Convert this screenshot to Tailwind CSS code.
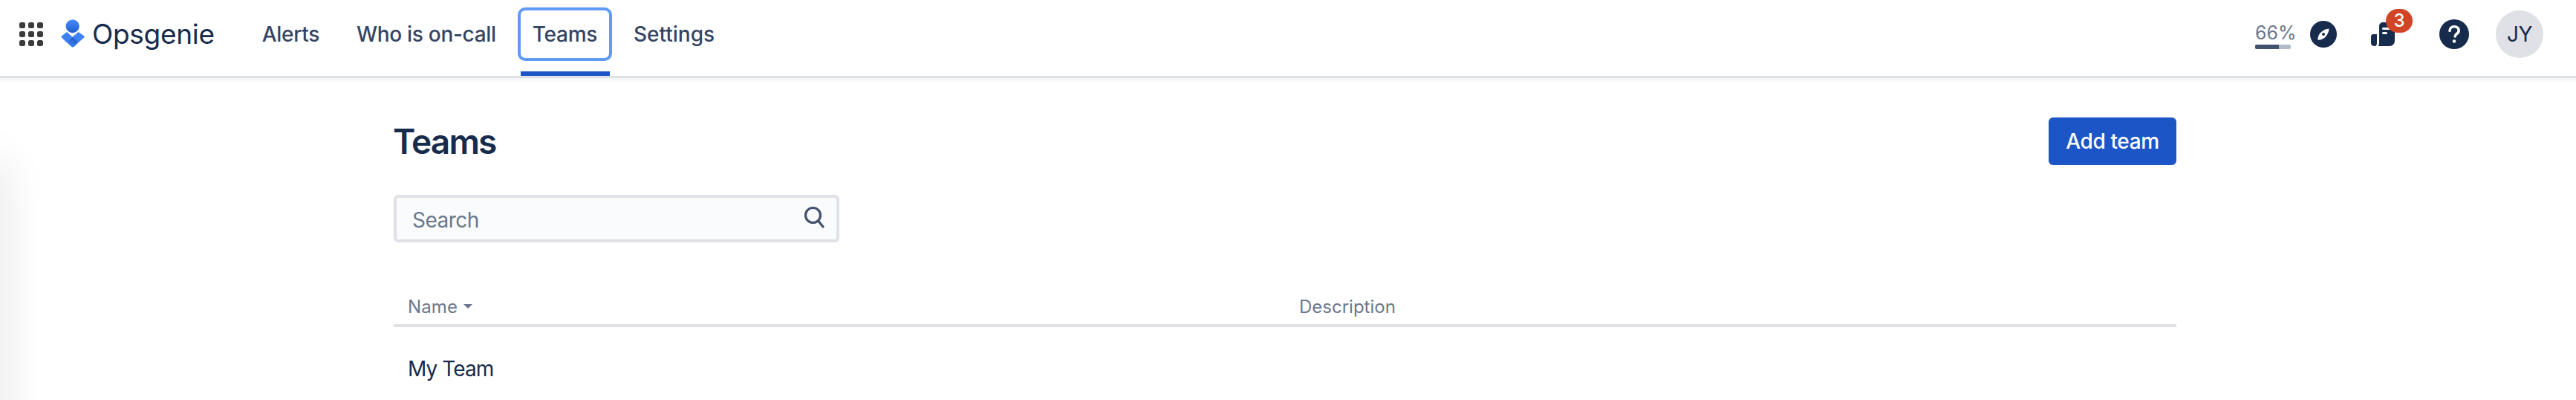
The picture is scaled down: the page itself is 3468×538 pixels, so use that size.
<!doctype html>
<html>
<head>
<meta charset="utf-8">
<script src="https://cdn.jsdelivr.net/npm/@tailwindcss/browser@4"></script>
</head>
<body class="bg-white">
<div class="relative h-[538px] w-[3468px] overflow-hidden bg-white font-['Inter',sans-serif] text-[#172b4d]">
  <div class="absolute left-[-30px] top-[220px] h-[500px] w-[30px] shadow-[0_0_60px_rgba(0,0,0,0.15)]"></div>

  <header class="relative z-10 flex h-[102px] items-center bg-white pl-[26px] pr-[44px] shadow-[0_3px_0_#dfe1e6,0_6px_4px_rgba(9,30,66,0.05)]">
    <svg class="mt-[-10px] h-[32px] w-[32px] shrink-0" viewBox="0 0 32 32" fill="#3b3b3b">
      <rect x="0" y="0" width="8" height="8" rx="2.5"/><rect x="12" y="0" width="8" height="8" rx="2.5"/><rect x="24" y="0" width="8" height="8" rx="2.5"/>
      <rect x="0" y="12" width="8" height="8" rx="2.5"/><rect x="12" y="12" width="8" height="8" rx="2.5"/><rect x="24" y="12" width="8" height="8" rx="2.5"/>
      <rect x="0" y="24" width="8" height="8" rx="2.5"/><rect x="12" y="24" width="8" height="8" rx="2.5"/><rect x="24" y="24" width="8" height="8" rx="2.5"/>
    </svg>
    <div class="ml-[24px] mt-[-12px] flex items-center gap-[10px]">
      <svg class="h-[38px] w-[32px] shrink-0" viewBox="0 0 32 38">
        <defs>
          <linearGradient id="h" x1="0" y1="0" x2="0" y2="1"><stop offset="0" stop-color="#4a8dfb"/><stop offset="1" stop-color="#1f5ed0"/></linearGradient>
          <linearGradient id="b" x1="0.9" y1="0.1" x2="0.3" y2="0.9"><stop offset="0" stop-color="#1d56c4"/><stop offset="1" stop-color="#3f82f5"/></linearGradient>
        </defs>
        <circle cx="15.7" cy="9.2" r="9" fill="url(#h)"/>
        <path d="M23.5 17 31 22.2c.7.5.8 1.3.3 2L17.6 36.7c-1 .8-2.2.8-3.2 0L7.5 30.5Z" fill="#3f82f5"/>
        <path d="M8 17 15.7 24 7.5 31 1 24.4c-.6-.7-.5-1.6.2-2.1Z" fill="#3f82f5"/>
        <path d="M15.7 24 23 30.6 17.6 36.7c-1 .8-2.2.8-3.2 0L7.5 30.5Z" fill="url(#b)"/>
      </svg>
      <span class="text-[37px] leading-none tracking-[-0.3px] text-[#172b4d]">Opsgenie</span>
    </div>
    <nav class="ml-[39px] flex h-full items-start pt-[10px] text-[28px] font-medium tracking-[-0.3px] text-[#344563]">
      <a class="mx-[4px] flex h-[72px] items-center px-[21px]">Alerts</a>
      <a class="mx-[4px] flex h-[72px] items-center px-[21px]">Who is on-call</a>
      <div class="relative mx-[4px] h-[72px]">
        <a class="flex h-[72px] items-center rounded-[10px] border-[4px] border-[#5f9bf5] px-[16px]">Teams</a>
        <span class="absolute left-[4px] right-[3px] top-[86px] h-[6px] bg-[#1c56c6]"></span>
      </div>
      <a class="mx-[4px] flex h-[72px] items-center px-[21px] tracking-[0px]">Settings</a>
    </nav>

    <div class="ml-auto mt-[14px] flex h-[64px] items-center self-start">
      <div class="mt-[5px] flex w-[53px] flex-col">
        <span class="text-[25px] leading-[26px] text-[#6b778c]">66%</span>
        <div class="mt-[3px] h-[6px] w-[48px] overflow-hidden rounded-[2px] bg-[#b3bac5]"><div class="h-full w-[32px] bg-[#42526e]"></div></div>
      </div>
      <svg class="ml-[21px] h-[36px] w-[36px] shrink-0" viewBox="0 0 36 36">
        <circle cx="18" cy="18" r="18" fill="#172b4d"/>
        <path d="M25.500 10.500c-.2 4.600-2.500 9.200-5.600 12-2.500 2.200-6.200 3.600-9.400 3.200-.4-3.300 1-6.900 3.300-9.400 2.800-3.100 7.200-5.500 11.700-5.800Z" fill="#fff"/>
        <circle cx="18" cy="18" r="2" fill="#172b4d"/>
      </svg>
      <div class="relative ml-[46px] h-[32px] w-[32px] shrink-0">
        <svg class="h-[32px] w-[32px]" viewBox="0 0 32 32">
          <path d="M16 0h9a7 7 0 0 1 7 7v18a7 7 0 0 1-7 7H9.500c1-1 1.500-2.500 1.500-5V5a5 5 0 0 1 5-5Z" fill="#172b4d"/>
          <path d="M3 16h5v12c0 2.300-1 4-2.800 4C2 32 0 30.500 0 28v-9c0-2 1.300-3 3-3Z" fill="#172b4d"/>
          <rect x="15" y="7" width="12" height="3" rx="1.500" fill="#fff"/>
          <rect x="15" y="13" width="7" height="3" rx="1.500" fill="#fff"/>
        </svg>
        <span class="absolute left-[20px] top-[-18px] flex h-[32px] w-[36px] items-center justify-center rounded-full bg-[#d04525] text-[24px] font-medium leading-none text-white">3</span>
      </div>
      <svg class="ml-[60px] h-[40px] w-[40px] shrink-0" viewBox="0 0 40 40">
        <circle cx="20" cy="20" r="20" fill="#172b4d"/>
        <path d="M14 15.500c0-3.600 2.700-5.800 6.200-5.800 3.400 0 6 2.100 6 5.300 0 2.500-1.400 3.700-3 4.800-1.400 1-2 1.700-2 3.200" fill="none" stroke="#fff" stroke-width="3.600" stroke-linecap="round"/>
        <circle cx="20" cy="29.500" r="2.300" fill="#fff"/>
      </svg>
      <div class="ml-[36px] flex h-[64px] w-[64px] shrink-0 items-center justify-center rounded-full bg-[#dfe1e6] text-[28px] tracking-[-0.5px] text-[#172b4d]">JY</div>
    </div>
  </header>

  <main class="ml-[530px] w-[2400px]">
    <div class="mt-[56px] flex h-[64px] items-center justify-between">
      <h1 class="ml-[-1px] text-[46px] font-semibold leading-none tracking-[-1.8px] text-[#172b4d]">Teams</h1>
      <button class="flex h-[64px] w-[172px] items-center justify-center rounded-[6px] bg-[#1c56c6] text-[28px] font-medium tracking-[-0.4px] text-white">Add team</button>
    </div>
    <div class="mt-[40px] flex h-[64px] w-[600px] items-center justify-between rounded-[6px] border-[4px] border-[#dfe1e6] bg-[#fafbfc] pl-[21px] pr-[16px]">
      <span class="pt-[3px] text-[28px] tracking-[-0.5px] text-[#6b778c]">Search</span>
      <svg class="mt-[-4px] h-[30px] w-[28px]" viewBox="0 0 28 30" fill="none" stroke="#42526e" stroke-width="3.200" stroke-linecap="round">
        <circle cx="12.500" cy="12.500" r="10"/><path d="M20 20.500 26 28"/>
      </svg>
    </div>
    <div class="mt-[72px] grid h-[42px] grid-cols-2 border-b-[4px] border-[#dfe1e6] text-[24px] leading-[30px] text-[#6b778c]">
      <div class="flex items-start pl-[19px]"><span class="tracking-[0.1px]">Name</span><span class="ml-[8px] mt-[11px] h-0 w-0 border-x-[6px] border-t-[6px] border-x-transparent border-t-[#6b778c]"></span></div>
      <div class="pl-[19px]">Description</div>
    </div>
    <div class="mt-[36px] pl-[19px] text-[28px] leading-[40px] tracking-[-0.9px] text-[#172b4d]">My Team</div>
  </main>
</div>
</body>
</html>
